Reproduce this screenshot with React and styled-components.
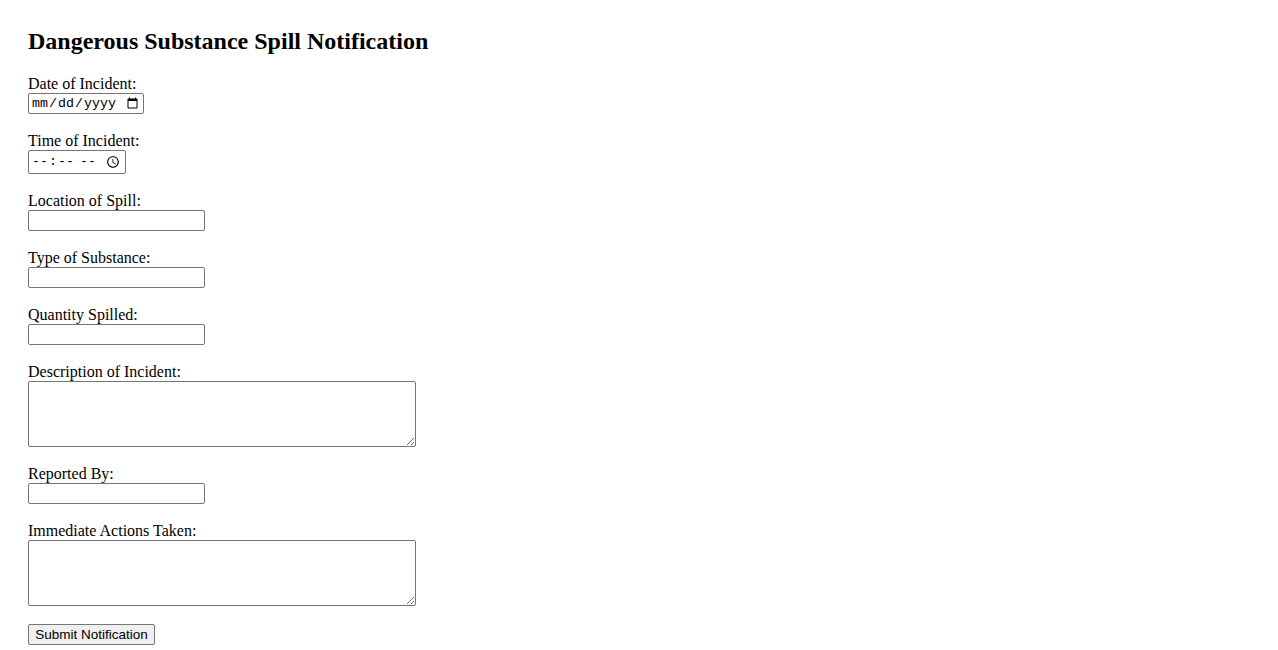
import React from "react";
import styled, { createGlobalStyle } from "styled-components";

const Global = createGlobalStyle`
  html, body { margin: 0; padding: 0; background: #ffffff; }
  body {
    font-family: "Liberation Serif", "Times New Roman", serif;
    font-size: 16px;
    color: #000000;
  }
`;

const Page = styled.div`
  padding: 27px 28px 0 28px;
`;

const Title = styled.h2`
  margin: 0 0 20px 0;
  font-size: 24px;
  line-height: 28px;
  font-weight: bold;
  font-family: "Liberation Serif", "Times New Roman", serif;
`;

const Form = styled.form`
  display: flex;
  flex-direction: column;
  align-items: flex-start;
  gap: 18px;
`;

const Field = styled.div`
  display: flex;
  flex-direction: column;
  align-items: flex-start;
`;

const Label = styled.label`
  display: block;
  font-size: 16px;
  line-height: 18px;
`;

const baseControl = `
  box-sizing: border-box;
  margin: 0;
  border: 1px solid #767676;
  border-radius: 2px;
  background: #ffffff;
  color: #000000;
  outline: none;
`;

const TextInput = styled.input`
  ${baseControl}
  width: ${(p) => p.$w || 177}px;
  height: ${(p) => p.$h || 21}px;
  padding: 1px 2px;
  font-family: ${(p) => (p.$mono ? '"Liberation Mono", monospace' : '"Liberation Sans", Arial, sans-serif')};
  font-size: 13.333px;
`;

const TextArea = styled.textarea`
  ${baseControl}
  width: 388px;
  height: 66px;
  padding: 2px;
  font-family: "Liberation Mono", monospace;
  font-size: 13.333px;
  resize: both;
`;

const Button = styled.button`
  box-sizing: border-box;
  margin: 0;
  width: 127px;
  height: 21px;
  padding: 1px 6px;
  border: 1px solid #767676;
  border-radius: 2px;
  background: #efefef;
  color: #000000;
  font-family: "Liberation Sans", Arial, sans-serif;
  font-size: 13.5px;
  line-height: 17px;
  white-space: nowrap;
  cursor: pointer;
`;

export default function App() {
  return (
    <>
      <Global />
      <Page>
        <Title>Dangerous Substance Spill Notification</Title>
        <Form onSubmit={(e) => e.preventDefault()}>
          <Field>
            <Label htmlFor="date">Date of Incident:</Label>
            <TextInput id="date" type="date" $w={116} $mono />
          </Field>
          <Field>
            <Label htmlFor="time">Time of Incident:</Label>
            <TextInput id="time" type="time" $w={98} $h={24} $mono />
          </Field>
          <Field>
            <Label htmlFor="location">Location of Spill:</Label>
            <TextInput id="location" type="text" />
          </Field>
          <Field>
            <Label htmlFor="substance">Type of Substance:</Label>
            <TextInput id="substance" type="text" />
          </Field>
          <Field>
            <Label htmlFor="quantity">Quantity Spilled:</Label>
            <TextInput id="quantity" type="text" />
          </Field>
          <Field>
            <Label htmlFor="description">Description of Incident:</Label>
            <TextArea id="description" />
          </Field>
          <Field>
            <Label htmlFor="reporter">Reported By:</Label>
            <TextInput id="reporter" type="text" />
          </Field>
          <Field>
            <Label htmlFor="actions">Immediate Actions Taken:</Label>
            <TextArea id="actions" />
          </Field>
          <Field>
            <Button type="submit">Submit Notification</Button>
          </Field>
        </Form>
      </Page>
    </>
  );
}
